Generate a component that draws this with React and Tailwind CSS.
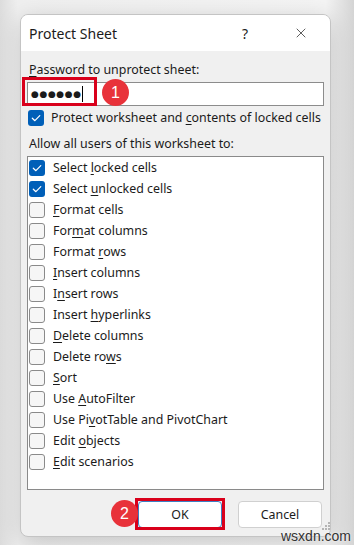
import { X } from "lucide-react"

const options = [
  ["Select ", "l", "ocked cells", true],
  ["Select ", "u", "nlocked cells", true],
  ["", "F", "ormat cells", false],
  ["For", "m", "at columns", false],
  ["Format ", "r", "ows", false],
  ["", "I", "nsert columns", false],
  ["I", "n", "sert rows", false],
  ["Insert ", "h", "yperlinks", false],
  ["", "D", "elete columns", false],
  ["Delete ro", "w", "s", false],
  ["", "S", "ort", false],
  ["Use ", "A", "utoFilter", false],
  ["Use Pi", "v", "otTable and PivotChart", false],
  ["Edit ", "o", "bjects", false],
  ["", "E", "dit scenarios", false],
]

const CheckBox = ({ checked }) =>
  checked ? (
    <div className="w-[16px] h-[16px] rounded-[3px] bg-[#005fb8] flex items-center justify-center shrink-0">
      <svg width="12" height="12" viewBox="0 0 12 12" fill="none">
        <path d="M2.3 6.2 L4.9 8.7 L9.8 3.6" stroke="white" strokeWidth="1.2" strokeLinecap="round" strokeLinejoin="round" />
      </svg>
    </div>
  ) : (
    <div className="w-[16px] h-[16px] rounded-[3px] border border-[#8a8a8a] bg-[#f6f6f6] shrink-0" />
  )

const Label = ({ pre, k, post }) => (
  <span>
    {pre}
    <span className="underline underline-offset-[2px] decoration-[0.8px]">{k}</span>
    {post}
  </span>
)

export default function App() {
  return (
    <div className="relative w-[354px] h-[545px] overflow-hidden pt-[14px] pl-[20px] bg-[linear-gradient(90deg,#dcdcdc_0%,#efefef_5%,#f4f4f4_92%,#d4d4d4_100%)] font-['Noto_Sans',sans-serif] text-[#1b1b1b]">
      {/* dialog */}
      <div className="w-[311px] h-[523px] rounded-[8px] border border-[#c4c4c4] bg-[#f0f0f0] overflow-hidden flex flex-col shadow-[0_6px_24px_rgba(0,0,0,0.18)]">
        <div className="h-[36px] bg-white flex items-center pl-[8px] pr-[6px] shrink-0">
          <span className="flex-1 text-[14px]">Protect Sheet</span>
          <div className="w-[46px] h-[36px] flex items-center justify-center text-[14px]">?</div>
          <div className="w-[46px] h-[36px] flex items-center justify-center ml-[10px]">
            <X size={16} strokeWidth={1.1} className="text-[#222]" />
          </div>
        </div>

        <div className="flex flex-col px-[6px] pt-[10px] text-[12.4px] leading-[18px]">
          <div className="pl-[2px]">
            <Label pre="" k="P" post="assword to unprotect sheet:" />
          </div>
          <div className="mt-[3px] h-[24px] bg-white border border-[#8c8c8c] flex items-center pl-[3px]">
            <span className="font-['DejaVu_Sans',sans-serif] text-[9px] tracking-[0.6px] leading-none">●●●●●●</span>
            <div className="w-[1px] h-[16px] bg-black" />
          </div>
          <div className="mt-[2px] h-[20px] flex items-center gap-[7px] pl-[1px]">
            <CheckBox checked />
            <Label pre="Protect worksheet and " k="c" post="ontents of locked cells" />
          </div>
          <div className="mt-[7px] pl-[2px]">Allow all users of this worksheet to:</div>
          <div className="mt-[3px] h-[334px] bg-white border border-[#8a8a8a] pl-[1px] flex flex-col">
            {options.map(([pre, k, post, checked]) => (
              <div key={pre + k + post} className="h-[21px] flex items-center gap-[8px]">
                <CheckBox checked={checked} />
                <Label pre={pre} k={k} post={post} />
              </div>
            ))}
          </div>
          <div className="mt-[11px] flex justify-end gap-[16px] pr-[2px]">
            <button className="w-[84px] h-[27px] bg-white border border-[#3d7fc4] rounded-[4px] text-[12.4px]">OK</button>
            <button className="w-[84px] h-[27px] bg-white border border-[#d0d0d0] rounded-[4px] text-[12.4px]">Cancel</button>
          </div>
        </div>
      </div>

      {/* resize grip */}
      <svg className="absolute left-[322px] top-[522px]" width="9" height="9" viewBox="0 0 9 9">
        <rect x="6" y="0" width="2" height="2" fill="#b5b5b5" />
        <rect x="3" y="3" width="2" height="2" fill="#b5b5b5" />
        <rect x="6" y="3" width="2" height="2" fill="#b5b5b5" />
        <rect x="0" y="6" width="2" height="2" fill="#b5b5b5" />
        <rect x="3" y="6" width="2" height="2" fill="#b5b5b5" />
        <rect x="6" y="6" width="2" height="2" fill="#b5b5b5" />
      </svg>

      {/* annotations */}
      <div className="absolute left-[22px] top-[77px] w-[75px] h-[29px] border-[3px] border-[#d9001b]" />
      <div className="absolute left-[102px] top-[79px] w-[27px] h-[27px] rounded-full bg-[#e8323a] text-white text-[16px] flex items-center justify-center font-['Liberation_Sans',sans-serif]">1</div>
      <div className="absolute left-[135px] top-[498px] w-[90px] h-[32px] border-[3px] border-[#d9001b]" />
      <div className="absolute left-[111px] top-[500px] w-[27px] h-[27px] rounded-full bg-[#e8323a] text-white text-[16px] flex items-center justify-center font-['Liberation_Sans',sans-serif]">2</div>

      <div className="absolute left-[281px] top-[526px] text-[14px] text-[#333] font-['Liberation_Sans',sans-serif] [text-shadow:0_0_2px_#fff]">wsxdn.com</div>
    </div>
  )
}
